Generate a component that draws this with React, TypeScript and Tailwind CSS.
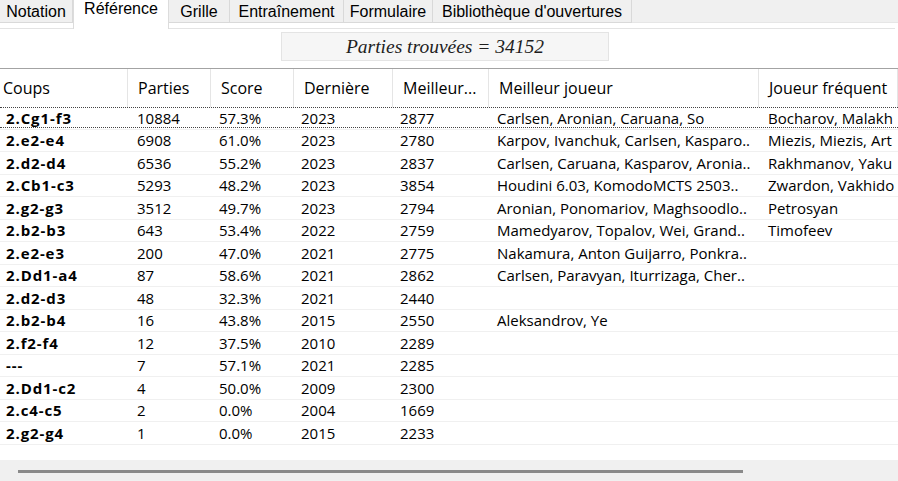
import React from "react";

const tabs = [
  { label: "Notation", w: "w-[73px]" },
  { label: "Référence", w: "w-[96px]", active: true },
  { label: "Grille", w: "w-[61px]" },
  { label: "Entraînement", w: "w-[114px]" },
  { label: "Formulaire", w: "w-[89px]" },
  { label: "Bibliothèque d'ouvertures", w: "w-[199px]" },
];

const cols = [
  { label: "Coups", w: "w-[128px]", hp: "pl-[3px]", dp: "pl-[6px]" },
  { label: "Parties", w: "w-[83px]", hp: "pl-[10px]", dp: "pl-[9px]" },
  { label: "Score", w: "w-[83px]", hp: "pl-[10px]", dp: "pl-[8px]" },
  { label: "Dernière", w: "w-[99px]", hp: "pl-[10px]", dp: "pl-[7px]" },
  { label: "Meilleur...", w: "w-[96px]", hp: "pl-[10px]", dp: "pl-[7px]" },
  { label: "Meilleur joueur", w: "w-[270px]", hp: "pl-[10px]", dp: "pl-[8px]" },
  { label: "Joueur fréquent", w: "w-[139px]", hp: "pl-[10px]", dp: "pl-[9px]" },
];

const rows: string[][] = [
  ["2.Cg1-f3", "10884", "57.3%", "2023", "2877", "Carlsen, Aronian, Caruana, So", "Bocharov, Malakh"],
  ["2.e2-e4", "6908", "61.0%", "2023", "2780", "Karpov, Ivanchuk, Carlsen, Kasparo..", "Miezis, Miezis, Art"],
  ["2.d2-d4", "6536", "55.2%", "2023", "2837", "Carlsen, Caruana, Kasparov, Aronia..", "Rakhmanov, Yaku"],
  ["2.Cb1-c3", "5293", "48.2%", "2023", "3854", "Houdini 6.03, KomodoMCTS 2503..", "Zwardon, Vakhido"],
  ["2.g2-g3", "3512", "49.7%", "2023", "2794", "Aronian, Ponomariov, Maghsoodlo..", "Petrosyan"],
  ["2.b2-b3", "643", "53.4%", "2022", "2759", "Mamedyarov, Topalov, Wei, Grand..", "Timofeev"],
  ["2.e2-e3", "200", "47.0%", "2021", "2775", "Nakamura, Anton Guijarro, Ponkra..", ""],
  ["2.Dd1-a4", "87", "58.6%", "2021", "2862", "Carlsen, Paravyan, Iturrizaga, Cher..", ""],
  ["2.d2-d3", "48", "32.3%", "2021", "2440", "", ""],
  ["2.b2-b4", "16", "43.8%", "2015", "2550", "Aleksandrov, Ye", ""],
  ["2.f2-f4", "12", "37.5%", "2010", "2289", "", ""],
  ["---", "7", "57.1%", "2021", "2285", "", ""],
  ["2.Dd1-c2", "4", "50.0%", "2009", "2300", "", ""],
  ["2.c4-c5", "2", "0.0%", "2004", "1669", "", ""],
  ["2.g2-g4", "1", "0.0%", "2015", "2233", "", ""],
];

export default function App() {
  return (
    <div className="w-[898px] h-[481px] bg-white overflow-hidden flex flex-col text-black">
      {/* Tab strip */}
      <div className="flex h-[23px] bg-[#f0f0f0] font-['Liberation_Sans',Arial,sans-serif] text-[16px] shrink-0">
        {tabs.map((t) =>
          t.active ? (
            <div
              key={t.label}
              className={`${t.w} h-[29px] bg-white border-x border-[#dcdcdc] flex justify-center leading-[18px] relative z-10`}
            >
              {t.label}
            </div>
          ) : (
            <div
              key={t.label}
              className={`${t.w} h-[23px] border-r border-b border-[#d9d9d9] flex justify-center pt-[3px] leading-[18px]`}
            >
              {t.label}
            </div>
          )
        )}
        <div className="flex-1 h-[23px] border-b border-[#e6e6e6]" />
      </div>
      <div className="h-[6px] mr-[3px] bg-white border-b border-[#e3e3e3] shrink-0" />

      {/* Result box */}
      <div className="flex pl-[281px] pt-[3px] shrink-0">
        <div className="w-[328px] h-[29px] bg-[#f6f6f6] border border-[#e4e4e4] flex items-center justify-center font-['Liberation_Serif',serif] italic text-[19.5px] text-[#1e1e1e]">
          Parties trouvées = 34152
        </div>
      </div>

      {/* Table */}
      <div className="mt-[7px] border-t border-[#a3a3a3] font-['Open_Sans',sans-serif] shrink-0">
        <div className="flex h-[38px] whitespace-nowrap overflow-hidden">
          {cols.map((c) => (
            <div
              key={c.label}
              className={`${c.w} shrink-0 h-full border-r border-[#e5e5e5] flex items-center ${c.hp} text-[16px]`}
            >
              {c.label}
            </div>
          ))}
        </div>
        <div className="flex flex-col">
          {rows.map((r, i) => (
            <div
              key={i}
              className="relative flex h-[22.5px] border-b border-[#f0f0f0] whitespace-nowrap overflow-hidden"
            >
              {i === 0 && (
                <div className="absolute left-0 right-0 top-[0px] h-[21px] border-y border-dotted border-[#444]" />
              )}
              {r.map((v, j) => (
                <div
                  key={j}
                  className={`${cols[j].w} shrink-0 flex items-center overflow-hidden ${cols[j].dp} ${
                    j === 0 ? "font-bold text-[15px] tracking-[0.9px]" : "text-[15px]"
                  }`}
                >
                  {v}
                </div>
              ))}
            </div>
          ))}
        </div>
      </div>
      <div className="flex-1" />
      {/* Horizontal scrollbar */}
      <div className="h-[21px] bg-[#f0f0f0] shrink-0 flex items-center pl-[18px]">
        <div className="w-[725px] h-[3px] bg-[#8a8a8a] mt-[2px]" />
      </div>
    </div>
  );
}
